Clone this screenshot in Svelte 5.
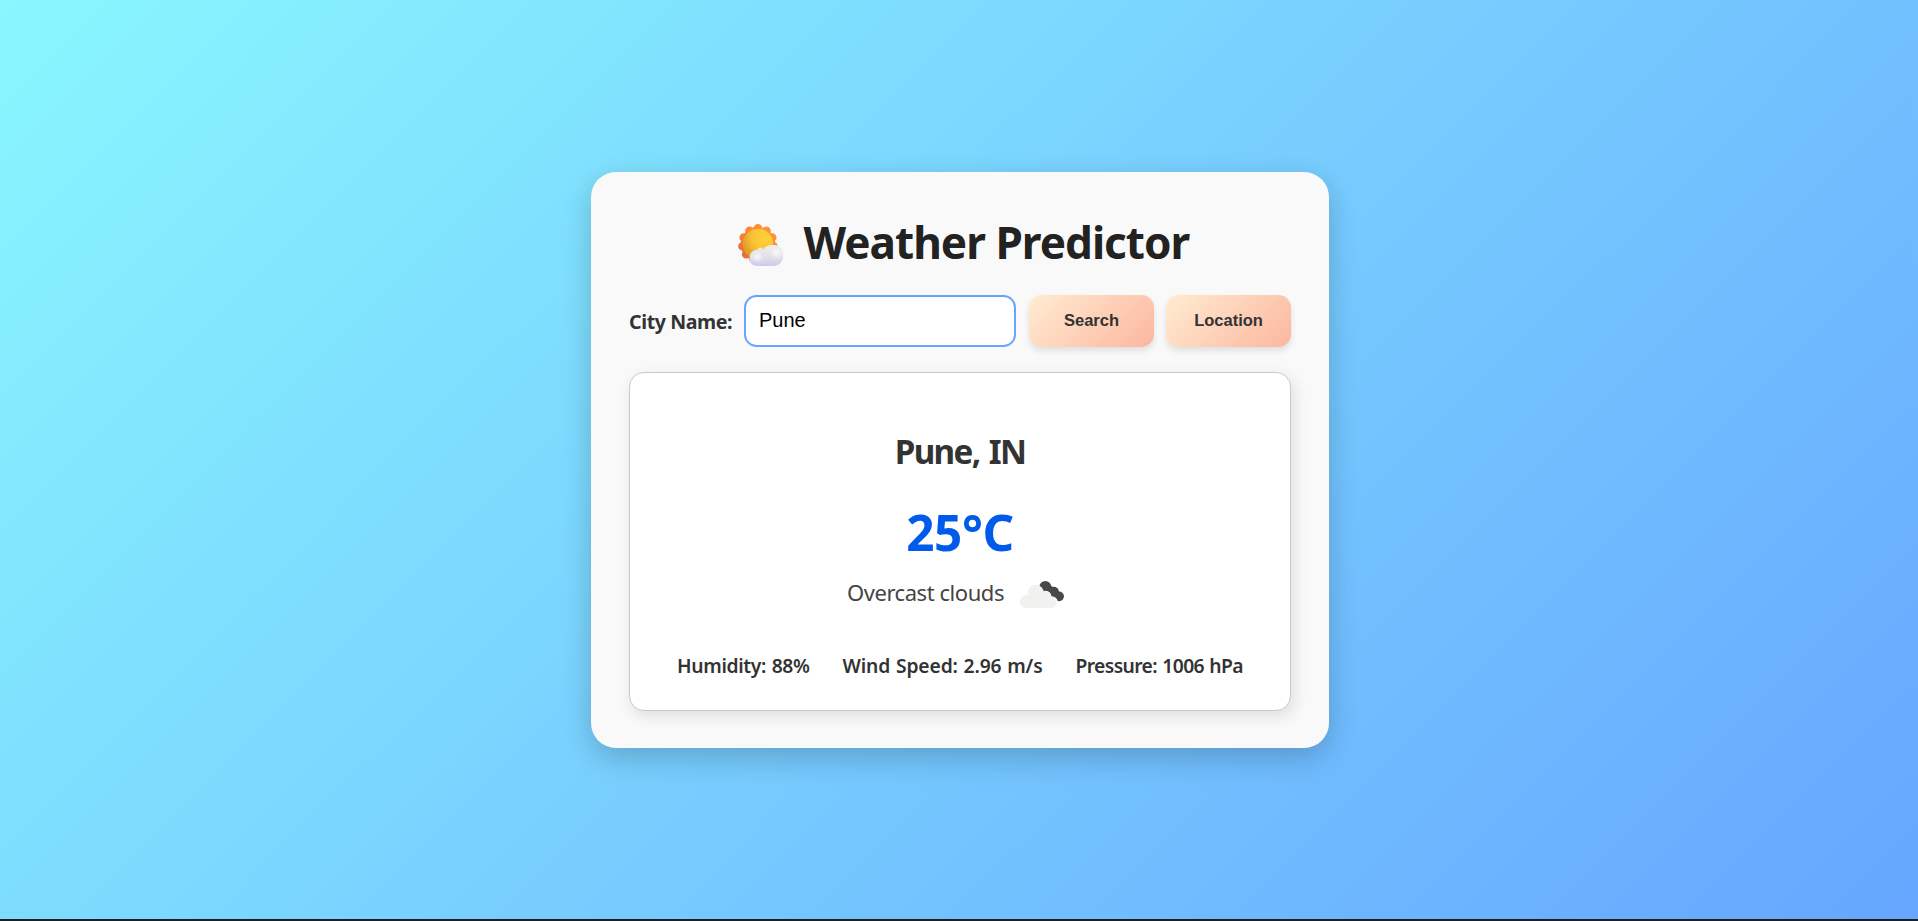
<script>
  let city = $state('Pune');
  const stats = [
    { text: 'Humidity: 88%', spacing: -0.35 },
    { text: 'Wind Speed: 2.96 m/s', spacing: -0.15 },
    { text: 'Pressure: 1006 hPa', spacing: -0.62 }
  ];
  const lobes = Array.from({ length: 11 }, (_, i) => {
    const a = (i / 11) * Math.PI * 2 - Math.PI / 2;
    return { x: 98 + 47 * Math.cos(a), y: 87 + 47 * Math.sin(a) };
  });
</script>

<div class="page">
  <main class="card">
    <header>
      <svg class="sun" viewBox="38 27 136 126" aria-hidden="true">
        <defs>
          <linearGradient id="ray" x1="1" y1="0" x2="0" y2="1">
            <stop offset="0" stop-color="#ff9d38" /><stop offset="0.5" stop-color="#fb8530" /><stop offset="1" stop-color="#df6048" />
          </linearGradient>
          <radialGradient id="disc" cx="0.72" cy="0.28" r="0.85">
            <stop offset="0" stop-color="#ffd23b" /><stop offset="0.5" stop-color="#f9c232" /><stop offset="1" stop-color="#d49324" />
          </radialGradient>
          <linearGradient id="puff" x1="0" y1="0" x2="0" y2="1">
            <stop offset="0" stop-color="#eeeeef" /><stop offset="0.6" stop-color="#e2e0e7" /><stop offset="1" stop-color="#cfc5f0" />
          </linearGradient>
          <radialGradient id="glow"><stop offset="0" stop-color="#fafafa" /><stop offset="1" stop-color="#f0eff2" stop-opacity="0" /></radialGradient>
          <clipPath id="puffShape">
            <path d="M97 153C82 153 72 143 72 129C72 114 83 104 96 104C100 97 109 97 114 103C119 94 130 89 143 89C161 89 174 102 174 120C174 140 161 153 142 153Z" />
          </clipPath>
        </defs>
        <path fill="url(#ray)" d={lobes.map((p) => `M${p.x - 13} ${p.y}a13 13 0 1 0 26 0a13 13 0 1 0 -26 0`).join('') + 'M46 87a52 52 0 1 0 104 0a52 52 0 1 0 -104 0'} />
        <circle cx="98" cy="87" r="46" fill="url(#disc)" />
        <g clip-path="url(#puffShape)">
          <rect x="70" y="88" width="106" height="66" fill="url(#puff)" />
          <circle cx="96" cy="126" r="19" fill="url(#glow)" />
          <circle cx="155" cy="112" r="24" fill="url(#glow)" />
        </g>
      </svg>
      <h1>Weather Predictor</h1>
    </header>

    <form onsubmit={(e) => e.preventDefault()}>
      <label for="city">City Name:</label>
      <input id="city" type="text" bind:value={city} />
      <button type="submit">Search</button>
      <button type="button">Location</button>
    </form>

    <section class="weather">
      <h2>Pune, IN</h2>
      <div class="temp">25°C</div>
      <div class="desc">
        <span>Overcast clouds</span>
        <svg class="clouds" viewBox="30 33 132 82" aria-hidden="true">
          <g fill="#48484a">
            <circle cx="106" cy="51" r="18" /><circle cx="132" cy="65" r="14.5" /><circle cx="147.5" cy="79" r="14.5" />
            <path d="M92 62L118 45L145 60L150 93H138Z" />
          </g>
          <g fill="#fff">
            <circle cx="107" cy="80" r="17.5" /><circle cx="125" cy="97" r="18.5" />
          </g>
          <g fill="#f1f1f0">
            <circle cx="50" cy="95" r="20" /><circle cx="77" cy="68" r="24" /><circle cx="105" cy="81" r="17" /><circle cx="123.5" cy="98" r="17" />
            <path d="M50 115V80H110L124 90V115Z" />
          </g>
        </svg>
      </div>
      <div class="stats">
        {#each stats as s}
          <span style="letter-spacing:{s.spacing}px">{s.text}</span>
        {/each}
      </div>
    </section>
  </main>
</div>

<style>
  :global(body) {
    background: #1e1f22;
  }
  .page {
    box-sizing: border-box;
    height: 919px;
    padding: 172px 0 0 2px;
    display: flex;
    justify-content: center;
    align-items: flex-start;
    background: linear-gradient(135deg, #89f7fe, #66a6ff);
    font-family: 'Noto Sans', 'Open Sans', sans-serif;
    color: #333;
  }
  .card {
    box-sizing: border-box;
    width: 738px;
    height: 576px;
    padding: 39px 38px 37px;
    border-radius: 25px;
    background: #f9f9f9;
    box-shadow: 0 10px 30px rgba(0, 0, 0, 0.2);
  }
  header {
    height: 62px;
    display: flex;
    align-items: center;
    justify-content: center;
    gap: 20.5px;
    padding-left: 7px;
  }
  .sun {
    width: 45.3px;
    height: 42px;
    margin-top: 6px;
    flex: none;
  }
  h1 {
    margin: 0;
    font-size: 44.1px;
    line-height: 62px;
    font-weight: 700;
    letter-spacing: -0.98px;
    color: #222;
    white-space: nowrap;
  }
  form {
    display: flex;
    align-items: center;
    height: 52px;
    margin-top: 22px;
  }
  label {
    width: 115px;
    padding-top: 2px;
    font-size: 19.6px;
    line-height: 52px;
    font-weight: 700;
    letter-spacing: -0.4px;
    white-space: nowrap;
  }
  input {
    box-sizing: border-box;
    width: 272px;
    height: 52px;
    margin: 0 13px 0 0;
    padding: 0 13px 2px;
    border: 2px solid #66a6ff;
    border-radius: 12.5px;
    background: #fff;
    color: #000;
    font: 20px 'Liberation Sans', Arial, sans-serif;
    outline: none;
  }
  button {
    width: 125px;
    height: 52px;
    padding: 0 0 2px;
    border: 0;
    border-radius: 12.5px;
    background: linear-gradient(135deg, #ffecd2, #fcb69f);
    box-shadow: 0 4px 6px rgba(0, 0, 0, 0.1);
    color: #333;
    font: bold 16.5px 'Liberation Sans', Arial, sans-serif;
  }
  button + button {
    margin-left: 12px;
  }
  .weather {
    box-sizing: border-box;
    height: 339px;
    margin-top: 25px;
    padding-top: 57px;
    border: 1px solid #c9c9c9;
    border-radius: 15px;
    background: #fff;
    box-shadow: 3px 5px 15px rgba(0, 0, 0, 0.11);
    text-align: center;
  }
  h2 {
    margin: 0;
    font-size: 33.2px;
    line-height: 44px;
    font-weight: 680;
    letter-spacing: -1.6px;
    word-spacing: 2px;
  }
  .temp {
    margin-top: 28px;
    font-size: 49.4px;
    line-height: 60px;
    font-weight: 700;
    letter-spacing: -0.45px;
    color: #005bea;
  }
  .desc {
    height: 32px;
    margin-top: 14px;
    padding-right: 9px;
    display: flex;
    align-items: center;
    justify-content: center;
    gap: 16px;
    font-size: 22px;
    line-height: 32px;
    letter-spacing: -0.45px;
    color: #444;
  }
  .clouds {
    width: 44px;
    height: 27.3px;
    margin-top: 5px;
  }
  .stats {
    margin-top: 45px;
    display: flex;
    justify-content: center;
    gap: 33px;
    font-size: 19.3px;
    line-height: 26px;
    font-weight: 600;
    word-spacing: 1px;
    white-space: nowrap;
  }
</style>
